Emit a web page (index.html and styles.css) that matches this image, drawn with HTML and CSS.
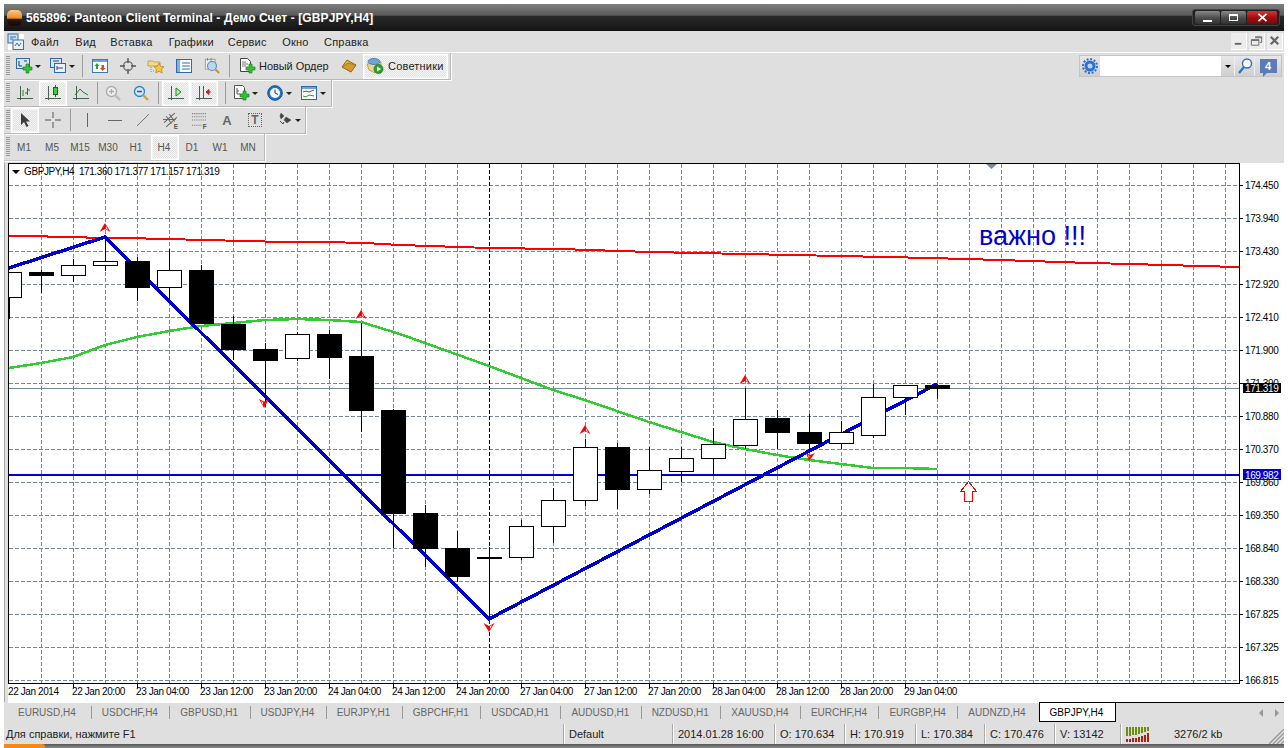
FILE: index.html
```html
<!DOCTYPE html>
<html lang="ru">
<head>
<meta charset="utf-8">
<title>Panteon Client Terminal</title>
<link rel="stylesheet" href="styles.css">
</head>
<body>
<div class="window">
  <header class="titlebar">
    <span class="logo"></span>
    <span class="title">565896: Panteon Client Terminal - Демо Счет - [GBPJPY,H4]</span>
    <div class="winbtns">
      <span class="wb wb-min"><i></i></span>
      <span class="wb wb-max"><i></i></span>
      <span class="wb wb-close">
        <svg viewBox="0 0 12 10" class="x"><path d="M1.5 1l9 8M10.5 1l-9 8"/></svg>
      </span>
    </div>
  </header>

  <nav class="menubar">
    <svg class="menuicon" viewBox="0 0 16 16"><rect x="0" y="0" width="10" height="9" fill="#cfe0f5" stroke="#3a6ea5"/><rect x="5" y="6" width="10.500" height="9.500" fill="#e7f0fb" stroke="#3a6ea5"/><path d="M7 12l2-3 2 3 2-3" fill="none" stroke="#3a6ea5"/><path d="M2 3h6M2 5h3" stroke="#3a6ea5"/></svg>
    <span class="mi">Файл</span><span class="mi">Вид</span><span class="mi">Вставка</span><span class="mi">Графики</span><span class="mi">Сервис</span><span class="mi">Окно</span><span class="mi">Справка</span>
    <div class="mdibtns">
      <span class="mdi"><svg viewBox="0 0 16 16"><path d="M4 10h7v2H4z" fill="#666"/></svg></span>
      <span class="mdi"><svg viewBox="0 0 16 16"><path d="M6.500 3.500h7v6h-2M2.500 6.500h8v6h-8zM2.500 7.500h8M6.500 4.500h7" fill="none" stroke="#666"/></svg></span>
      <span class="mdi"><svg viewBox="0 0 16 16"><path d="M4 3.500l8 8M12 3.500l-8 8" stroke="#666" stroke-width="2.400"/></svg></span>
    </div>
  </nav>

  <div class="rowline">
    <div class="tb tb-main">
      <span class="grip"></span>
      <span class="btn drop"><svg class="ic" viewBox="0 0 16 16"><rect x=".5" y=".5" width="13" height="10" fill="#d6e6f8" stroke="#2f6aa8"/><path d="M3 3v5h3M8 3h3" stroke="#334" fill="none"/><path d="M10 6h3v3h3v3h-3v3h-3v-3H7V9h3z" fill="#35c035" stroke="#14831c" stroke-width=".7"/></svg><i class="arr"></i></span>
      <span class="btn drop"><svg class="ic" viewBox="0 0 16 16"><rect x=".5" y=".5" width="11" height="9" fill="#d6e6f8" stroke="#2f6aa8"/><rect x="4.500" y="5.500" width="11" height="9" fill="#e8f1fb" stroke="#2f6aa8"/><path d="M3 3h6M7 8v4M7 10h6" stroke="#444"/></svg><i class="arr"></i></span>
      <span class="sep"></span>
      <span class="btn"><svg class="ic" viewBox="0 0 16 16"><rect x=".5" y="1.500" width="15" height="13" fill="#fff" stroke="#3a78b8"/><rect x="1" y="2" width="14" height="2" fill="#6aa5dc"/><path d="M5 5L2.500 8H4v3h2V8h1.500z" fill="#2ca02c"/><path d="M10.500 13L13.500 10H12V7h-2.500v3H8z" fill="#e0472c"/></svg></span>
      <span class="btn"><svg class="ic" viewBox="0 0 16 16"><circle cx="8" cy="8" r="4.500" fill="none" stroke="#777" stroke-width="1.400"/><path d="M8 0v5M8 11v5M0 8h5M11 8h5" stroke="#555" stroke-width="1.400"/></svg></span>
      <span class="btn"><svg class="ic" viewBox="0 0 16 16"><path d="M0 3h5l1 1h6v4H0z" fill="#f3d98a" stroke="#b99638" stroke-width=".8"/><path d="M11 5l1.600 3.400 3.400.4-2.500 2.400.7 3.800-3.200-1.800-3.200 1.800.7-3.800L6 8.800l3.400-.4z" fill="#f5c842" stroke="#b98a1c" stroke-width=".8"/><path d="M3 9v6M5 13h1" stroke="#888" stroke-dasharray="1 1"/></svg></span>
      <span class="btn"><svg class="ic" viewBox="0 0 16 16"><rect x=".5" y="1.500" width="15" height="13" fill="#fff" stroke="#2f6aa8"/><rect x="1" y="2" width="3" height="12" fill="#7eb0e4"/><path d="M6 5h8M6 8h8M6 11h8" stroke="#2f6aa8"/></svg></span>
      <span class="btn"><svg class="ic" viewBox="0 0 18 18"><rect x="1.500" y="1.500" width="11" height="11" fill="#eee" stroke="#999"/><circle cx="9" cy="9" r="5" fill="#bcd6ee" stroke="#5f87ad" stroke-width="1.200"/><path d="M13 13l4 4" stroke="#c49a2a" stroke-width="2.400"/><path d="M4 0v3M8 0v3" stroke="#777"/></svg></span>
      <span class="sep sep-s"></span>
      <span class="btn btn-order"><svg class="ic" viewBox="0 0 16 16"><path d="M1.500.5h7l3 3v10h-10z" fill="#fff" stroke="#444"/><path d="M3 4h4M3 6h6M3 8h4" stroke="#777"/><path d="M10 6h3v3h3v3h-3v3h-3v-3H7V9h3z" fill="#35c035" stroke="#14831c" stroke-width=".7"/></svg><span class="lbl lbl-o">Новый Ордер</span></span>
      <span class="btn"><svg class="ic" viewBox="0 0 16 16"><path d="M1 9l5-7 9 5-5 7z" fill="#e3b54a" stroke="#8f6a1a"/><path d="M1 9l9 5 5-7-8-2z" fill="#d29b2c" stroke="#8f6a1a" stroke-width=".7"/></svg></span>
      <span class="btn on btn-sov"><svg class="ic" viewBox="0 0 16 16"><path d="M0 6l14-2v5l-6 6-6-3z" fill="#ecd28a" stroke="#a98d3c" stroke-width=".7"/><ellipse cx="7" cy="3.500" rx="6" ry="3" fill="#6aa5dc" stroke="#33689e" stroke-width=".7"/><circle cx="11.500" cy="11" r="4.500" fill="#2aa52a" stroke="#126e12" stroke-width=".7"/><path d="M10 8.500l4 2.500-4 2.500z" fill="#fff"/></svg><span class="lbl">Советники</span></span>
    </div>
    <div class="searchbox">
      <span class="sb sb-gear"><svg viewBox="0 0 16 16" class="ic"><circle cx="8" cy="8" r="5.500" fill="#2f6fd0"/><circle cx="8" cy="8" r="7" fill="none" stroke="#2f6fd0" stroke-width="2" stroke-dasharray="2 1.660"/><circle cx="8" cy="8" r="2.500" fill="#bcd6f5"/></svg></span>
      <span class="sb-input"></span>
      <span class="sb sb-drop"><i class="arr arr-k"></i></span>
      <span class="sb sb-find"><svg viewBox="0 0 16 16" class="ic"><circle cx="10" cy="5.500" r="4.500" fill="#fff" stroke="#2f6fd0" stroke-width="1.400"/><path d="M7 9l-5 6" stroke="#2f6fd0" stroke-width="2.200"/></svg></span>
      <span class="sb sb-msg"><span class="msg">4</span></span>
    </div>
  </div>

  <div class="rowline">
    <div class="tb">
      <span class="grip"></span>
      <span class="btn"><svg class="ic" viewBox="0 0 16 16"><path d="M3.500 1v14M0 13.500h16" stroke="#4a6050" fill="none"/><path d="M10.500 3v7M8 8h2.500M10.500 5H13M6 5v6" stroke="#148a14" fill="none"/></svg></span>
      <span class="btn on"><svg class="ic" viewBox="0 0 16 16"><path d="M3.500 1v14M0 13.500h16" stroke="#4a6050" fill="none"/><path d="M10.500 0v12" stroke="#146e14"/><rect x="8.500" y="2.500" width="4" height="7" fill="#3fd03f" stroke="#146e14"/></svg></span>
      <span class="btn"><svg class="ic" viewBox="0 0 16 16"><path d="M3.500 1v14M0 13.500h16" stroke="#4a6050" fill="none"/><path d="M2 10l5-6 3 3 5 3" stroke="#148a14" fill="none"/></svg></span>
      <span class="sep sep-t"></span>
      <span class="btn"><svg class="ic" viewBox="0 0 16 16"><circle cx="6.500" cy="6.500" r="5" fill="#f0f0f0" stroke="#aaa" stroke-width="1.300"/><path d="M4 6.500h5M6.500 4v5" stroke="#aaa" stroke-width="1.300"/><path d="M10 10l5 5" stroke="#bbb" stroke-width="2.400"/></svg></span>
      <span class="btn"><svg class="ic" viewBox="0 0 16 16"><circle cx="6.500" cy="6.500" r="5" fill="#cfe6f8" stroke="#2f84c4" stroke-width="1.300"/><path d="M4 6.500h5" stroke="#225e96" stroke-width="1.500"/><path d="M10 10l5 5" stroke="#d1a52f" stroke-width="2.400"/></svg></span>
      <span class="sep"></span>
      <span class="btn on"><svg class="ic" viewBox="0 0 16 16"><path d="M3.500 1v14M0 13.500h16" stroke="#4a6050" fill="none"/><path d="M8 3l5 4-5 4z" fill="#bdf0bd" stroke="#148a14"/></svg></span>
      <span class="btn on"><svg class="ic" viewBox="0 0 16 16"><path d="M3.500 1v14M0 13.500h16M7.500 1v12" stroke="#4a6050" fill="none"/><path d="M10 7h5M10 7l3-2.500v5z" fill="#d22" stroke="#b22"/></svg></span>
      <span class="sep sep-w"></span>
      <span class="btn drop"><svg class="ic" viewBox="0 0 16 16"><path d="M1.500.5h8l2 2v11h-10z" fill="#fff" stroke="#555"/><path d="M4 3v6h3M4 6h2" stroke="#555" fill="none"/><path d="M10 6h3v3h3v3h-3v3h-3v-3H7V9h3z" fill="#35c035" stroke="#14831c" stroke-width=".7"/></svg><i class="arr"></i></span>
      <span class="btn drop"><svg class="ic" viewBox="0 0 16 16"><circle cx="8" cy="8" r="7.300" fill="#1f73c8" stroke="#154f8c"/><circle cx="8" cy="8" r="5" fill="#f3f7fc"/><path d="M8 4.500V8l3 1.500" stroke="#333" fill="none"/></svg><i class="arr"></i></span>
      <span class="btn drop"><svg class="ic" viewBox="0 0 16 16"><rect x=".5" y="1.500" width="15" height="13" fill="#fff" stroke="#2f6aa8"/><rect x="1" y="2" width="14" height="2" fill="#6aa5dc"/><path d="M2 7l3-1 3 1 5-2" stroke="#b3372c" fill="none"/><path d="M2 11l3 1 3-2 5 1" stroke="#2a9a2a" fill="none"/></svg><i class="arr"></i></span>
    </div>
  </div>

  <div class="rowline">
    <div class="tb">
      <span class="grip"></span>
      <span class="btn on"><svg class="ic" viewBox="0 0 16 16"><path d="M4 1v12l3-3 2.500 5 2-1-2.500-4.500H13z" fill="#3c3c3c"/></svg></span>
      <span class="btn"><svg class="ic" viewBox="0 0 16 16"><path d="M8 0v6M8 10v6M0 8h6M10 8h6" stroke="#555" fill="none"/></svg></span>
      <span class="sep sep-m"></span>
      <span class="btn"><svg class="ic" viewBox="0 0 16 16"><path d="M8.500 1v14" stroke="#666"/></svg></span>
      <span class="btn"><svg class="ic" viewBox="0 0 16 16"><path d="M1 8.500h14" stroke="#666"/></svg></span>
      <span class="btn"><svg class="ic" viewBox="0 0 16 16"><path d="M2 14L14 2" stroke="#777"/></svg></span>
      <span class="btn"><svg class="ic ic-wide" viewBox="0 0 16 16"><path d="M1 10L11 1M3 14L13 5M3 4l5 7M6 2l5 7M0 7h12" stroke="#666" fill="none"/><text x="10" y="16" class="ic-t">E</text></svg></span>
      <span class="btn"><svg class="ic ic-wide" viewBox="0 0 16 16"><path d="M1 1.500h13M1 4.500h13M1 7.500h13M1 12.500h9" stroke="#777" stroke-dasharray="1 1" fill="none"/><text x="11" y="16" class="ic-t">F</text></svg></span>
      <span class="btn"><span class="glyph">A</span></span>
      <span class="btn"><span class="glyph glyph-t">T</span></span>
      <span class="btn drop drop-obj"><svg class="ic" viewBox="0 0 16 16"><path d="M3 1l3 3-3 3-1-3zM8 5l5 3-4 3-3-3z" fill="#444" stroke="#444" stroke-width=".5"/><path d="M2 9l3 3 1-2" stroke="#444" fill="none"/></svg><i class="arr"></i></span>
    </div>
  </div>

  <div class="rowline">
    <div class="tb tb-tf">
      <span class="grip"></span>
      <span class="btn tf">M1</span><span class="btn tf">M5</span><span class="btn tf">M15</span><span class="btn tf">M30</span><span class="btn tf">H1</span><span class="btn tf on">H4</span><span class="btn tf">D1</span><span class="btn tf">W1</span><span class="btn tf">MN</span>
    </div>
  </div>

  <main class="chartwrap">
    <svg class="chart" viewBox="8 163 1276 539" width="1276" height="539">
      <path class="grid" d="M41.500 164V683M73.500 164V683M105.500 164V683M137.500 164V683M169.500 164V683M201.500 164V683M233.500 164V683M265.500 164V683M297.500 164V683M329.500 164V683M361.500 164V683M393.500 164V683M425.500 164V683M457.500 164V683M521.500 164V683M553.500 164V683M585.500 164V683M617.500 164V683M649.500 164V683M681.500 164V683M713.500 164V683M745.500 164V683M777.500 164V683M809.500 164V683M841.500 164V683M873.500 164V683M905.500 164V683M937.500 164V683M969.500 164V683M1001.500 164V683M1033.500 164V683M1065.500 164V683M1097.500 164V683M1129.500 164V683M1161.500 164V683M1193.500 164V683M1225.500 164V683"/>
      <path class="grid" d="M9 185.500H1239M9 218.500H1239M9 251.500H1239M9 284.500H1239M9 317.500H1239M9 350.500H1239M9 383.500H1239M9 416.500H1239M9 449.500H1239M9 482.500H1239M9 515.500H1239M9 548.500H1239M9 581.500H1239M9 614.500H1239M9 647.500H1239M9 680.500H1239"/>
      <path class="sepline" d="M489.500 164V683"/>
      <path class="priceline" d="M9 388.500H1239"/>
      <path class="hline" d="M9 475H1239"/>
      <polyline class="ma-red" points="9,236 47,236 48,237 86,237 87,238 125,238 126,238 165,239 205,240 245,241 285,242 325,242 365,243 400,245 489,248 560,249 650,252 745,254 840,256 930,258 1000,260 1090,263 1130,264 1165,265 1200,266 1239,267"/>
      <polyline class="ma-green" points="9,368 41,363 73,357 105,345 137,337 169,331 201,326 233,323 265,320 297,319 329,320 361,322 400,334 489,366 521,378 553,390 585,400 617,411 649,422 681,432 713,442 745,449 777,455 809,460 841,464 873,468 905,468 937,469"/>
      <polyline class="zigzag" points="9,268 105,237 489,619 937,384"/>
      <path class="wick" d="M9.500 298V319M41.500 270V293M73.500 259V282M105.500 237V271M137.500 257V301M169.500 249V300M201.500 265V324M233.500 316V360M265.500 343V407M297.500 332V361M329.500 330V379M361.500 323V432M393.500 409V548M425.500 505V567M457.500 531V582M489.500 547V620M521.500 520V560M553.500 488V543M585.500 439V506M617.500 443V509M649.500 447V494M681.500 447V482M713.500 428V475M745.500 388V449M777.500 410V449M809.500 414V452M841.500 421V449M873.500 384V438M905.500 385V415M937.500 384V399"/>
      <g class="up">
        <rect x="-3.500" y="272.500" width="25" height="25"/>
        <rect x="61.500" y="265.500" width="24" height="10"/>
        <rect x="93.500" y="261.500" width="24" height="4"/>
        <rect x="157.500" y="270.500" width="24" height="17"/>
        <rect x="285.500" y="334.500" width="24" height="24"/>
        <rect x="509.500" y="526.500" width="24" height="31"/>
        <rect x="541.500" y="500.500" width="24" height="26"/>
        <rect x="573.500" y="447.500" width="24" height="53"/>
        <rect x="637.500" y="470.500" width="24" height="19"/>
        <rect x="669.500" y="458.500" width="24" height="13"/>
        <rect x="701.500" y="444.500" width="24" height="14"/>
        <rect x="733.500" y="419.500" width="24" height="26"/>
        <rect x="829.500" y="432.500" width="24" height="11"/>
        <rect x="861.500" y="397.500" width="24" height="38"/>
        <rect x="893.500" y="385.500" width="24" height="12"/>
      </g>
      <g class="down">
        <rect x="29" y="272" width="25" height="4"/>
        <rect x="125" y="261" width="25" height="27"/>
        <rect x="189" y="270" width="25" height="54"/>
        <rect x="221" y="324" width="25" height="26"/>
        <rect x="253" y="349" width="25" height="12"/>
        <rect x="317" y="334" width="25" height="24"/>
        <rect x="349" y="356" width="25" height="55"/>
        <rect x="381" y="410" width="25" height="104"/>
        <rect x="413" y="513" width="25" height="36"/>
        <rect x="445" y="548" width="25" height="29"/>
        <rect x="477" y="557" width="25" height="2"/>
        <rect x="605" y="447" width="25" height="43"/>
        <rect x="765" y="418" width="25" height="15"/>
        <rect x="797" y="432" width="25" height="12"/>
        <rect x="925" y="385" width="25" height="4"/>
      </g>
      <g class="fractal">
        <path d="M105 223l5.500 9-5.500-3-5.500 3zM106 226l2 4-2-1.200z"/>
        <path d="M361 310l5.500 9-5.500-3-5.500 3zM362 313l2 4-2-1.200z"/>
        <path d="M585 425l5.500 9-5.500-3-5.500 3zM586 428l2 4-2-1.200z"/>
        <path d="M745 375l5.500 9-5.500-3-5.500 3zM746 378l2 4-2-1.200z"/>
        <path d="M264 408l-5-9 5 2.500 5-2.500zM263 405l-2-4 2 1.200z"/>
        <path d="M489 632l-5.500-9 5.500 3 5.500-3zM490 629l2-4-2 1.200z"/>
        <path d="M809 461l-3-8 4 2 5-2zM809 458l-1-3 1.500.8z"/>
      </g>
      <path class="bigarrow" d="M968.500 481.500l8 10h-4v10h-8v-10h-4z"/>
      <path class="ruler" d="M8.500 163.500H1239.500V683.500H8.500z"/>
      <path class="ticks" d="M1240 185.500h3M1240 218.500h3M1240 251.500h3M1240 284.500h3M1240 317.500h3M1240 350.500h3M1240 383.500h3M1240 416.500h3M1240 449.500h3M1240 482.500h3M1240 515.500h3M1240 548.500h3M1240 581.500h3M1240 614.500h3M1240 647.500h3M1240 680.500h3M73.500 684v4M137.500 684v4M201.500 684v4M265.500 684v4M329.500 684v4M393.500 684v4M457.500 684v4M521.500 684v4M585.500 684v4M649.500 684v4M713.500 684v4M777.500 684v4M841.500 684v4M905.500 684v4"/>
      <path class="marker" d="M986 164h11l-5.500 5z"/>
      <path class="hdrtri" d="M12 170h8l-4 4z"/>
      <text class="axis" x="24" y="175">GBPJPY,H4  171.360 171.377 171.157 171.319</text>
      <text class="note" x="979" y="245">важно !!!</text>
      <g class="axis">
        <text x="1245" y="189">174.450</text><text x="1245" y="222">173.940</text><text x="1245" y="255">173.430</text><text x="1245" y="288">172.920</text><text x="1245" y="321">172.410</text><text x="1245" y="354">171.900</text><text x="1245" y="387">171.390</text><text x="1245" y="420">170.880</text><text x="1245" y="453">170.370</text><text x="1245" y="486">169.860</text><text x="1245" y="519">169.350</text><text x="1245" y="552">168.840</text><text x="1245" y="585">168.330</text><text x="1245" y="618">167.825</text><text x="1245" y="651">167.325</text><text x="1245" y="684">166.815</text>
        <text x="8" y="695">22 Jan 2014</text><text x="72" y="695">22 Jan 20:00</text><text x="136" y="695">23 Jan 04:00</text><text x="200" y="695">23 Jan 12:00</text><text x="264" y="695">23 Jan 20:00</text><text x="328" y="695">24 Jan 04:00</text><text x="392" y="695">24 Jan 12:00</text><text x="456" y="695">24 Jan 20:00</text><text x="520" y="695">27 Jan 04:00</text><text x="584" y="695">27 Jan 12:00</text><text x="648" y="695">27 Jan 20:00</text><text x="712" y="695">28 Jan 04:00</text><text x="776" y="695">28 Jan 12:00</text><text x="840" y="695">28 Jan 20:00</text><text x="904" y="695">29 Jan 04:00</text>
      </g>
      <rect class="tag-k" x="1243" y="383" width="38" height="10"/>
      <text class="axis tag-t" x="1245" y="392">171.319</text>
      <rect class="tag-b" x="1243" y="469" width="38" height="11"/>
      <text class="axis tag-t" x="1245" y="479">169.982</text>
    </svg>
  </main>

  <div class="tabs">
    <span class="tab">EURUSD,H4</span><span class="tab">USDCHF,H4</span><span class="tab">GBPUSD,H1</span><span class="tab">USDJPY,H4</span><span class="tab">EURJPY,H1</span><span class="tab">GBPCHF,H1</span><span class="tab">USDCAD,H1</span><span class="tab">AUDUSD,H1</span><span class="tab">NZDUSD,H1</span><span class="tab">XAUUSD,H4</span><span class="tab">EURCHF,H4</span><span class="tab">EURGBP,H4</span><span class="tab">AUDNZD,H4</span><span class="tab tab-on">GBPJPY,H4</span>
    <div class="tabfill"><i class="sc sc-l"></i><i class="sc sc-r"></i></div>
  </div>

  <footer class="status">
    <span class="cell">Для справки, нажмите F1</span>
    <span class="cell">Default</span>
    <span class="cell">2014.01.28 16:00</span>
    <span class="cell">O: 170.634</span>
    <span class="cell">H: 170.919</span>
    <span class="cell">L: 170.384</span>
    <span class="cell">C: 170.476</span>
    <span class="cell">V: 13142</span>
    <span class="cell cell-net">
      <svg class="bars" viewBox="0 0 24 15"><path d="M0.500 0v9M3.500 0v9M6.500 0v8M9.500 0v8M12.500 0v7M15.500 0v6M18.500 0v5M21.500 0v4" stroke="#6f8c12" stroke-width="2"/><path d="M0.500 12v3M3.500 12v3M6.500 11v4M9.500 11v4M12.500 10v5M15.500 9v6M18.500 8v7M21.500 6v9" stroke="#a82410" stroke-width="2"/></svg>
      <span>3276/2 kb</span>
    </span>
    <svg class="sizegrip" viewBox="0 0 15 15"><path d="M0 15L15 0M4 15L15 4M8 15l7-7M12 15l3-3" stroke="#999" stroke-width="1.300"/></svg>
  </footer>
  <div class="taskstrip"><span class="taskorange"></span></div>
</div>
</body>
</html>
```
FILE: styles.css
```css
* { box-sizing: border-box; }
html, body { margin: 0; height: 100%; background: #fff; overflow: hidden; }
body { padding: 4px 4px 0; font-family: "Liberation Sans", Arial, sans-serif; font-size: 11px; color: #222; }
i { display: block; }

.window { width: 1280px; height: 744px; display: flex; flex-direction: column; background: #dfdfdf; position: relative; }

/* title bar */
.titlebar { height: 27px; flex: none; display: flex; align-items: center; padding: 0 4px 0 3px;
  background: linear-gradient(#7f7f7f 0, #5a5a5a 42%, #2a2a2a 44%, #141414 100%); }
.logo { width: 15px; height: 16px; border-radius: 5px; background: linear-gradient(#f8c98a 0, #ef8a1f 50%, #2a1404 60%, #1a0a00 100%); margin-right: 4px; }
.title { color: #fff; font-weight: bold; font-size: 12px; letter-spacing: .1px; white-space: nowrap; }
.winbtns { margin-left: auto; display: flex; gap: 1px; padding: 1px 2px; background: #222; border-radius: 3px; border: 1px solid #444; height: 17px; }
.wb { width: 25px; height: 13px; border-radius: 2px; background: linear-gradient(#8a8a8a, #4a4a4a 55%, #333); display: flex; align-items: center; justify-content: center; position: relative; }
.wb-min i { width: 9px; height: 2px; background: #fff; margin-top: 6px; }
.wb-max i { width: 9px; height: 7px; border: 1px solid #fff; border-top-width: 2px; }
.wb-close { width: 30px; background: linear-gradient(#d33, #a01010 50%, #7a0808); }
.x { width: 11px; height: 9px; }
.x path { stroke: #fff; stroke-width: 2; fill: none; }

/* menu */
.menubar { height: 22px; flex: none; display: flex; align-items: center; border-bottom: 1px solid #fff; padding-left: 4px; font-size: 11px; letter-spacing: .2px; }
.menuicon { width: 16px; height: 16px; background: #fff; margin-right: 6px; flex: none; overflow: visible; }
.mi { margin: 0 14.500px 0 1px; color: #222; }
.mi:nth-of-type(1) { margin-right: 15.500px; }
.mi:nth-of-type(2) { margin-right: 13.500px; }
.mi:nth-of-type(3) { margin-right: 15px; }
.mi:nth-of-type(4) { margin-right: 13px; }
.mdibtns { margin-left: auto; display: flex; gap: 2px; padding-right: 1px; }
.mdi { width: 16px; height: 17px; background: #ececec; border-right: 1px solid #fff; border-bottom: 1px solid #fff; display: flex; align-items: center; justify-content: center; }
.mdi svg { width: 16px; height: 16px; }

/* toolbars */
.rowline { height: 27px; flex: none; display: flex; align-items: stretch; }
.tb { display: flex; align-items: center; height: 27px; border-right: 1px solid #b8b8b8; border-bottom: 1px solid #b8b8b8; box-shadow: 1px 1px 0 #fff; padding-right: 1px; }
.tb-main { padding-right: 2px; }
.tb-tf { border-bottom-color: #c9c9c9; }
.grip { width: 7px; height: 20px; flex: none; margin-right: 0; background: repeating-linear-gradient(#9a9a9a 0 1px, transparent 1px 2px) 2px 0 / 4px 100% no-repeat; }
.btn { height: 25px; width: 28px; flex: none; display: flex; align-items: center; justify-content: center; color: #444; border: 1px solid transparent; }
.btn.on { border: 1px solid #fff; box-shadow: inset 0 0 0 1px #f4f4f4; background: repeating-conic-gradient(#f6f6f6 0 25%, #dfdfdf 0 50%) 0 0 / 2px 2px; }
.ic { width: 16px; height: 16px; flex: none; overflow: visible; }
.ic-wide { width: 17px; height: 17px; }
.ic-t { font-family: "Liberation Sans", Arial, sans-serif; font-size: 6px; font-weight: bold; fill: #555; }
.drop { width: 34px; gap: 3px; }
.drop-obj { width: 30px; margin-left: 5px; gap: 1px; }
.arr { width: 0; height: 0; flex: none; border: 3px solid transparent; border-top: 3px solid #222; border-bottom: 0; }
.arr-k { border-top-color: #000; }
.sep { width: 7px; height: 22px; flex: none; background: linear-gradient(#9c9c9c, #9c9c9c) center / 1px 100% no-repeat; }
.sep-s { width: 6px; }
.sep-t { width: 4px; }
.sep-m { width: 6px; }
.sep-w { width: 10px; background-position: 7px 0; }
.btn-order { width: 103px; justify-content: flex-start; padding-left: 6px; gap: 4px; }
.lbl { font-size: 11px; letter-spacing: .2px; color: #222; white-space: nowrap; }
.lbl-o { letter-spacing: -.05px; }
.btn-sov { width: 85px; justify-content: flex-start; padding-left: 3px; gap: 5px; }
.glyph { font-size: 13px; font-weight: bold; color: #666; }
.glyph-t { border: 1px dotted #666; width: 14px; height: 14px; line-height: 12px; text-align: center; font-size: 12px; }
.tf { font-size: 10px; color: #555; padding-right: 2px; }

/* search */
.searchbox { margin: 2px 2px 0 auto; width: 203px; height: 22px; display: flex; border: 1px solid #c4c4c4; background: #d9d9d9; }
.sb { display: flex; align-items: center; justify-content: center; background: linear-gradient(#e8e8e8, #cfcfcf); flex: none; }
.sb-gear { width: 20px; }
.sb-input { width: 121px; background: #fff; flex: none; }
.sb-drop { width: 14px; border-right: 1px solid #eee; }
.sb-find { width: 20px; border-right: 1px solid #eee; }
.sb-msg { flex: 1; }
.msg { width: 17px; height: 14px; background: #5a7db8; color: #fff; font-weight: bold; font-size: 11px; text-align: center; line-height: 14px; position: relative; }
.msg::after { content: ""; position: absolute; left: 3px; top: 14px; border: 2px solid transparent; border-top-color: #5a7db8; border-left-color: #5a7db8; }

/* chart */
.chartwrap { height: 539px; margin-top: 2px; padding-left: 4px; flex: none; border-left: 1px solid #a8a8a8; }
.chart { display: block; background: #fff; margin-left: -1px; }
.chart path, .chart polyline { fill: none; }
.grid { stroke: #778899; stroke-dasharray: 4 2; shape-rendering: crispEdges; }
.sepline { stroke: #000; stroke-dasharray: 4 2; shape-rendering: crispEdges; }
.priceline { stroke: #778899; shape-rendering: crispEdges; }
.hline { stroke: #0000cd; stroke-width: 2; shape-rendering: crispEdges; }
.ma-red { stroke: #ff0000; stroke-width: 2; shape-rendering: crispEdges; }
.ma-green { stroke: #32cd32; stroke-width: 2.500; shape-rendering: crispEdges; }
.zigzag { stroke: #0000cd; stroke-width: 3.500; shape-rendering: crispEdges; }
.wick { stroke: #000; shape-rendering: crispEdges; }
.up rect { fill: #fff; stroke: #000; shape-rendering: crispEdges; }
.down rect { fill: #000; shape-rendering: crispEdges; }
.chart .fractal path { fill: #f00; fill-rule: evenodd; }
.chart .bigarrow { fill: #fff; stroke: #f00; shape-rendering: crispEdges; }
.ruler { stroke: #000; shape-rendering: crispEdges; }
.ticks { stroke: #000; shape-rendering: crispEdges; }
.chart .marker { fill: #778899; }
.chart .hdrtri { fill: #000; }
.axis { font-family: "Liberation Sans", Arial, sans-serif; font-size: 10px; letter-spacing: -.4px; fill: #000; white-space: pre; }
.note { font-family: "Liberation Sans", Arial, sans-serif; font-size: 27px; fill: #0000cd; }
.tag-k { fill: #000; }
.tag-b { fill: #0000cd; }
.axis.tag-t { fill: #fff; }

/* tabs */
.tabs { height: 20px; flex: none; display: flex; font-size: 10px; color: #666; padding-left: 4px; }
.tab { height: 20px; padding: 0 12.400px 0 10px; display: flex; align-items: center; white-space: nowrap; border-top: 1px solid #fff; background: linear-gradient(#999, #999) right 3px / 1px 13px no-repeat; }
.tab:nth-child(1) { padding-right: 16px; }
.tab:nth-child(13) { background: none; padding-right: 13px; }
.tab-on { background: #fff; color: #000; border: 1px solid #000; padding: 0 12px 0 10px; }
.tabfill { flex: 1; border-top: 1px solid #000; display: flex; justify-content: flex-end; align-items: center; gap: 12px; padding-right: 5px; }
.sc { width: 0; height: 0; border: 4px solid transparent; }
.sc-l { border-right: 4px solid #999; border-left: 0; }
.sc-r { border-left: 4px solid #999; border-right: 0; }

/* status */
.status { height: 20px; margin-top: 2px; flex: none; display: grid; grid-template-columns: 559px 109px 102px 70px 71px 69px 70px 66px 1fr; position: relative; font-size: 11px; color: #222; }
.cell { display: flex; align-items: center; padding-left: 5px; white-space: nowrap; border-left: 1px solid #aaa; box-shadow: inset 1px 0 #fff; }
.cell:first-child { border-left: 0; box-shadow: none; padding-left: 2px; }
.cell-net { gap: 24px; }
.bars { width: 24px; height: 15px; flex: none; shape-rendering: crispEdges; }
.sizegrip { position: absolute; right: 0; bottom: 0; width: 15px; height: 15px; }
.taskstrip { height: 4px; flex: none; background: linear-gradient(#555, #8c8c8c); }
.taskorange { display: block; width: 41px; height: 4px; background: #f08a1d; border-radius: 0 3px 0 0; }
```
